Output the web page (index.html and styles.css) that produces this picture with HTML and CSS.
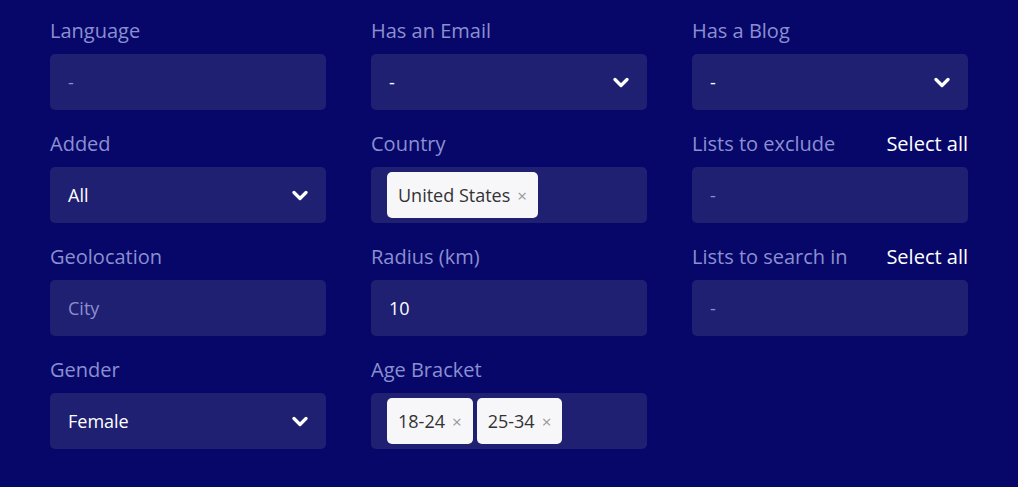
FILE: index.html
```html
<!DOCTYPE html>
<html>
<head>
    <title>Filters</title>
    <link rel="stylesheet" href="styles.css">
</head>
<body>
    <div class="filters">
        <div class="field">
            <div class="label-row"><span class="label">Language</span></div>
            <div class="box"><span class="placeholder">-</span></div>
        </div>
        <div class="field">
            <div class="label-row"><span class="label">Has an Email</span></div>
            <div class="box select">
                <span class="value">-</span>
                <svg class="chevron" width="16" height="11" viewBox="0 0 16 11"><path d="M2 2.5 L8 8.5 L14 2.5" fill="none" stroke="#fff" stroke-width="3.2" stroke-linecap="round" stroke-linejoin="round"/></svg>
            </div>
        </div>
        <div class="field">
            <div class="label-row"><span class="label">Has a Blog</span></div>
            <div class="box select">
                <span class="value">-</span>
                <svg class="chevron" width="16" height="11" viewBox="0 0 16 11"><path d="M2 2.5 L8 8.5 L14 2.5" fill="none" stroke="#fff" stroke-width="3.2" stroke-linecap="round" stroke-linejoin="round"/></svg>
            </div>
        </div>

        <div class="field">
            <div class="label-row"><span class="label">Added</span></div>
            <div class="box select">
                <span class="value">All</span>
                <svg class="chevron" width="16" height="11" viewBox="0 0 16 11"><path d="M2 2.5 L8 8.5 L14 2.5" fill="none" stroke="#fff" stroke-width="3.2" stroke-linecap="round" stroke-linejoin="round"/></svg>
            </div>
        </div>
        <div class="field">
            <div class="label-row"><span class="label">Country</span></div>
            <div class="box tags">
                <span class="chip">United States <span class="remove">&times;</span></span>
            </div>
        </div>
        <div class="field">
            <div class="label-row"><span class="label">Lists to exclude</span><span class="select-all">Select all</span></div>
            <div class="box"><span class="placeholder">-</span></div>
        </div>

        <div class="field">
            <div class="label-row"><span class="label">Geolocation</span></div>
            <div class="box"><span class="placeholder">City</span></div>
        </div>
        <div class="field">
            <div class="label-row"><span class="label">Radius (km)</span></div>
            <div class="box"><span class="value">10</span></div>
        </div>
        <div class="field">
            <div class="label-row"><span class="label">Lists to search in</span><span class="select-all">Select all</span></div>
            <div class="box"><span class="placeholder">-</span></div>
        </div>

        <div class="field">
            <div class="label-row"><span class="label">Gender</span></div>
            <div class="box select">
                <span class="value">Female</span>
                <svg class="chevron" width="16" height="11" viewBox="0 0 16 11"><path d="M2 2.5 L8 8.5 L14 2.5" fill="none" stroke="#fff" stroke-width="3.2" stroke-linecap="round" stroke-linejoin="round"/></svg>
            </div>
        </div>
        <div class="field">
            <div class="label-row"><span class="label">Age Bracket</span></div>
            <div class="box tags">
                <span class="chip">18-24 <span class="remove">&times;</span></span>
                <span class="chip">25-34 <span class="remove">&times;</span></span>
            </div>
        </div>
    </div>
</body>
</html>
```

FILE: styles.css
```css
body {
    margin: 0;
    background-color: #07076a;
    font-family: "Open Sans", "Noto Sans", sans-serif;
}

.filters {
    display: grid;
    grid-template-columns: repeat(3, 276px);
    column-gap: 45px;
    row-gap: 20px;
    padding: 17px 0 0 50px;
}

.label-row {
    display: flex;
    justify-content: space-between;
    align-items: center;
    height: 26px;
    margin-bottom: 11px;
}

.label {
    color: #8b8fd0;
    font-size: 20px;
}

.select-all {
    color: #fff;
    font-size: 20px;
}

.box {
    height: 56px;
    box-sizing: border-box;
    background-color: #1f2071;
    border-radius: 5px;
    display: flex;
    align-items: center;
    padding: 0 18px;
    font-size: 18px;
}

.placeholder {
    color: #8b8fd0;
}

.value {
    color: #fff;
}

/* select boxes carry a chevron on the right */
.select {
    justify-content: space-between;
}

.chevron {
    display: block;
}

.tags {
    padding: 0 16px;
    gap: 4px;
}

.chip {
    display: flex;
    align-items: center;
    height: 46px;
    padding: 0 11px;
    background-color: #f7f7fa;
    border-radius: 5px;
    color: #333;
    font-size: 18px;
}

.remove {
    color: #999;
    font-size: 17px;
    margin-left: 7px;
}
```
